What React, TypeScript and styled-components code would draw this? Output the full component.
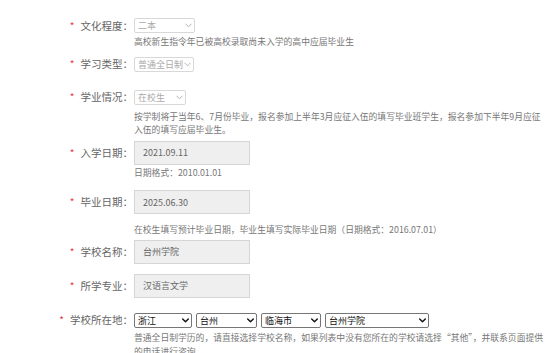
import styled, { createGlobalStyle } from "styled-components";

const GlobalStyle = createGlobalStyle`
  html, body {
    margin: 0;
    padding: 0;
    background: #fff;
    overflow: hidden;
  }
  body {
    font-family: "Noto Sans CJK SC", "Noto Sans", sans-serif;
    color: #555;
  }
`;

const regions = [
  { value: "浙江", width: 58 },
  { value: "台州", width: 61 },
  { value: "临海市", width: 60 },
  { value: "台州学院", width: 104 },
];

function Chevron({ $active }: { $active?: boolean }) {
  return (
    <ChevronIcon viewBox="0 0 8 5" $active={$active}>
      <path d="M0.8 0.8 L4 4 L7.2 0.8" fill="none" strokeLinecap="round" strokeLinejoin="round" />
    </ChevronIcon>
  );
}

function Dropdown({ value, width, disabled }: { value: string; width: number; disabled?: boolean }) {
  return (
    <SelectBox>
      <Select disabled={disabled} $active={!disabled} $width={width} defaultValue={value}>
        <option>{value}</option>
      </Select>
      <Chevron $active={!disabled} />
    </SelectBox>
  );
}

export default function App() {
  return (
    <>
      <GlobalStyle />
      <Page>
        <Field $top={18}>
          <Row>
            <Label>
              <Star>*</Star>文化程度：
            </Label>
            <Dropdown disabled width={61} value="二本" />
          </Row>
          <Hint $top={2}>高校新生指令年已被高校录取尚未入学的高中应届毕业生</Hint>
        </Field>

        <Field $top={8}>
          <Row>
            <Label>
              <Star>*</Star>学习类型：
            </Label>
            <Dropdown disabled width={60} value="普通全日制" />
          </Row>
        </Field>

        <Field $top={18}>
          <Row>
            <Label>
              <Star>*</Star>学业情况：
            </Label>
            <Dropdown disabled width={52} value="在校生" />
          </Row>
          <Hint $top={5}>
            按学制将于当年6、7月份毕业，报名参加上半年3月应征入伍的填写毕业班学生，报名参加下半年9月应征入伍的填写应届毕业生。
          </Hint>
        </Field>

        <Field $top={4}>
          <Row>
            <Label>
              <Star>*</Star>入学日期：
            </Label>
            <TextInput readOnly value="2021.09.11" />
          </Row>
          <Hint $top={1}>日期格式：2010.01.01</Hint>
        </Field>

        <Field $top={11}>
          <Row>
            <Label>
              <Star>*</Star>毕业日期：
            </Label>
            <TextInput readOnly value="2025.06.30" />
          </Row>
          <Hint $top={9}>
            在校生填写预计毕业日期，毕业生填写实际毕业日期（日期格式：2016.07.01）
          </Hint>
        </Field>

        <Field $top={3}>
          <Row>
            <Label>
              <Star>*</Star>学校名称：
            </Label>
            <TextInput readOnly value="台州学院" />
          </Row>
        </Field>

        <Field $top={10}>
          <Row>
            <Label>
              <Star>*</Star>所学专业：
            </Label>
            <TextInput readOnly value="汉语言文学" />
          </Row>
        </Field>

        <Field $top={15}>
          <Row>
            <Label>
              <Star>*</Star>学校所在地：
            </Label>
            <SelectGroup>
              {regions.map((r) => (
                <Dropdown key={r.value} width={r.width} value={r.value} />
              ))}
            </SelectGroup>
          </Row>
          <Hint $top={3} $lineHeight={14}>
            普通全日制学历的，请直接选择学校名称，如果列表中没有您所在的学校请选择“其他”，并联系页面提供的电话进行咨询
          </Hint>
        </Field>
      </Page>
    </>
  );
}

const Page = styled.div`
  display: flex;
  flex-direction: column;
  width: 554px;
`;

const Field = styled.div<{ $top: number }>`
  display: flex;
  flex-direction: column;
  margin-top: ${(p) => p.$top}px;
`;

const Row = styled.div`
  display: flex;
  align-items: center;
  gap: 1px;
`;

const Label = styled.label`
  width: 133px;
  flex-shrink: 0;
  text-align: right;
  font-size: 10.5px;
  line-height: 14px;
  color: #666;
  white-space: nowrap;
`;

const Star = styled.span`
  color: #e4393c;
  margin-right: 6px;
  font-size: 10px;
`;

const SelectBox = styled.div`
  position: relative;
  display: inline-flex;
`;

const Select = styled.select<{ $width: number; $active: boolean }>`
  appearance: none;
  width: ${(p) => p.$width}px;
  height: 15px;
  box-sizing: border-box;
  padding: 0 1px 0 3px;
  font-family: "Noto Sans CJK SC", sans-serif;
  font-size: 9px;
  line-height: 13px;
  border-radius: 2px;
  background: #fff;
  opacity: 1;
  color: ${(p) => (p.$active ? "#111" : "#aaa")};
  border: 1px solid ${(p) => (p.$active ? "#767676" : "#d8d8d8")};
  outline: none;
`;

const ChevronIcon = styled.svg<{ $active?: boolean }>`
  position: absolute;
  right: 3px;
  top: 5px;
  width: 7px;
  height: 5px;
  pointer-events: none;
  background: #fff;
  stroke: ${(p) => (p.$active ? "#111" : "#aaa")};
  stroke-width: ${(p) => (p.$active ? 1.6 : 1)};
`;

const SelectGroup = styled.div`
  display: flex;
  gap: 4px;
`;

const TextInput = styled.input`
  width: 116px;
  height: 24px;
  box-sizing: border-box;
  padding: 0 8px;
  border: 1px solid #d6d6d6;
  background: #efefef;
  font-family: "Noto Sans CJK SC", sans-serif;
  font-size: 9px;
  color: #666;
  outline: none;
`;

const Hint = styled.p<{ $top: number; $lineHeight?: number }>`
  margin: ${(p) => p.$top}px 0 0 134px;
  width: 412px;
  font-size: 8.8px;
  line-height: ${(p) => p.$lineHeight ?? 13.5}px;
  color: #777;
`;
